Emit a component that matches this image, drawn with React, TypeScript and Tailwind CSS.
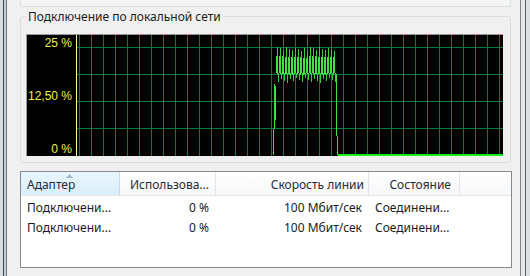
import React from 'react'

// grid geometry of the network graph (local coords inside the 477x122 plot)
const GRID_V = Array.from({ length: 36 }, (_, k) => 53.5 + 12 * k)
const GRID_H = [13.5, 40.5, 67.5, 94.5]

const r = (n: number) => ((n * 37) % 11) / 11

// dense band of samples between ~25% and ~18%
function bandPath() {
  let d = ''
  for (let c = 0; c < 60; c++) {
    if (c % 3 === 2) continue
    const x = 250.5 + c
    d += ` M${x} ${22 + r(c) * 2} V${39 + r(c + 3) * 2}`
  }
  return d
}

// spikes above and below the band
function spikePath() {
  let d = ''
  for (let k = 0; k < 20; k++) {
    const x = 251.5 + k * 3
    d += ` M${x} ${13 + r(k) * 4} V24`
    d += ` M${x + 1} 39 V${44 + r(k + 5) * 5}`
  }
  return d
}

const NetworkGraph: React.FC = () => (
  <svg width="477" height="122" viewBox="0 0 477 122" className="block">
    <rect x="0" y="0" width="477" height="122" fill="#000" />
    <g shapeRendering="crispEdges">
      <line x1="0" y1="0.5" x2="477" y2="0.5" stroke="#9a9a9a" />
      <line x1="0.5" y1="0" x2="0.5" y2="122" stroke="#9a9a9a" />
      {GRID_V.map((x) => (
        <line key={x} x1={x} y1="1" x2={x} y2="122" stroke="#008040" />
      ))}
      {GRID_H.map((y) => (
        <line key={y} x1="51" y1={y} x2="477" y2={y} stroke="#008040" />
      ))}
      <line x1="50.5" y1="1" x2="50.5" y2="122" stroke="#ffffa8" />
    </g>
    <g fontFamily="'Liberation Sans', Arial, sans-serif" fontSize="12" fill="#f2f23c" textAnchor="end">
      <text x="46" y="13">25 %</text>
      <text x="46" y="66">12,50 %</text>
      <text x="46" y="119">0 %</text>
    </g>
    <g fill="none" strokeWidth="1" shapeRendering="crispEdges">
      <path d="M247.5 121 V95 M248.5 95 V50 M249.5 52 V86" stroke="#3ee03e" />
      <path d={bandPath()} stroke="#44e244" />
      <path d={spikePath()} stroke="#38d038" />
      <path d="M310.5 40 V102 M311.5 102 V121" stroke="#3ee03e" />
    </g>
    <rect x="312" y="120" width="165" height="2" fill="#19f019" />
  </svg>
)

const rows = [
  { name: 'Подключени...', usage: '0 %', speed: '100 Мбит/сек', state: 'Соединени...' },
  { name: 'Подключени...', usage: '0 %', speed: '100 Мбит/сек', state: 'Соединени...' },
]

export default function App() {
  return (
    <div className="w-[530px] h-[276px] overflow-hidden flex bg-[#f0f0f0] text-[12px] text-[#1a1a1a] font-['Noto_Sans',sans-serif]">
      {/* left window frame */}
      <div className="flex w-[20px] shrink-0">
        <div className="w-[3px] bg-[#d9dde0]" />
        <div className="w-px bg-[#34465a]" />
        <div className="w-[2px] bg-[#c8ccd0]" />
        <div className="w-px bg-[#6e7882]" />
      </div>

      {/* main column */}
      <div className="w-[492px] shrink-0 flex flex-col">
        <div className="h-[7px] mr-[1px] border border-t-0 border-[#d5dfe5] rounded-b-[3px] bg-[#f4f4f4]" />

        <fieldset className="mt-[1px] mr-[1px] border border-[#d5dfe5] rounded-[3px] px-[5px] pb-[6px] pt-[9px] min-w-0">
          <legend className="ml-0 px-[2px] leading-[16px] pt-[1px]">Подключение по локальной сети</legend>
          <NetworkGraph />
        </fieldset>

        <div className="mt-[8px] h-[97px] border border-[#828790] bg-white flex flex-col">
          <div className="flex h-[24px] border-b border-[#e5e5e5] text-[#1e2a38]">
            <div className="relative w-[99px] flex items-center pl-[6px] pt-[3px] border-r border-[#c1dcf0] bg-linear-to-b from-[#e9f6fd] to-[#d9effc]">
              <svg width="7" height="4" viewBox="0 0 7 4" className="absolute top-[2px] left-[45px]">
                <polygon points="0,4 3.5,0 7,4" fill="#9fb9d3" />
              </svg>
              Адаптер
            </div>
            <div className="w-[96px] flex items-center justify-end pr-[6px] pt-[3px] border-r border-[#e2e6ec] bg-linear-to-b from-white to-[#f6f7f9]">
              Использова...
            </div>
            <div className="w-[153px] flex items-center justify-end pr-[4px] pt-[3px] border-r border-[#e2e6ec] bg-linear-to-b from-white to-[#f6f7f9]">
              Скорость линии
            </div>
            <div className="w-[91px] flex items-center justify-end pr-[8px] pt-[3px] border-r border-[#e2e6ec] bg-linear-to-b from-white to-[#f6f7f9]">
              Состояние
            </div>
            <div className="flex-1 bg-linear-to-b from-white to-[#f6f7f9]" />
          </div>

          <div className="pt-[2px]">
            {rows.map((row, i) => (
              <div key={i} className="flex h-[20px] items-center">
                <div className="w-[99px] pl-[6px]">{row.name}</div>
                <div className="w-[96px] text-right pr-[7px]">{row.usage}</div>
                <div className="w-[153px] text-right pr-[7px]">{row.speed}</div>
                <div className="w-[91px] pl-[6px]">{row.state}</div>
              </div>
            ))}
          </div>
        </div>
      </div>

      {/* right window frame */}
      <div className="flex flex-1">
        <div className="w-[8px] bg-[#f0f0f0]" />
        <div className="w-px bg-[#7c848c]" />
        <div className="w-[4px] bg-[#e4e6e8]" />
        <div className="w-px bg-[#56606a]" />
        <div className="flex-1 bg-[#dcdfe2]" />
      </div>
    </div>
  )
}
